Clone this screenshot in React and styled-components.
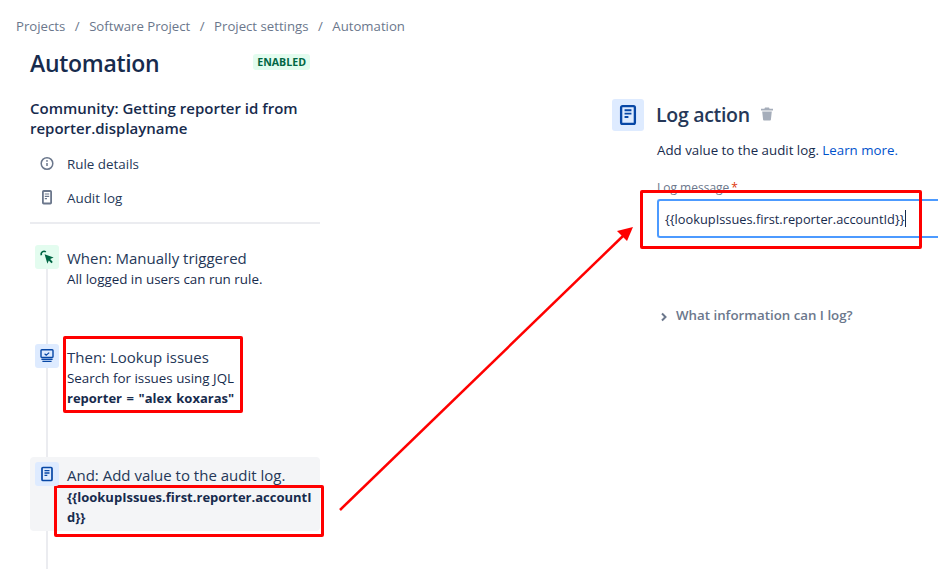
import React from 'react';
import styled, { createGlobalStyle } from 'styled-components';

const GlobalStyle = createGlobalStyle`
  html, body { margin: 0; padding: 0; background: #fff; }
  body {
    font-family: "Open Sans", "Noto Sans", sans-serif;
    color: #172b4d;
    width: 938px;
    height: 569px;
    overflow: hidden;
  }
`;

const Page = styled.div`
  position: relative;
  width: 938px;
  height: 569px;
  overflow: hidden;
  box-sizing: border-box;
  padding-top: 16px;
`;

const Breadcrumbs = styled.nav`
  display: flex;
  height: 20px;
  padding-left: 16px;
  font-size: 13.2px;
  line-height: 20px;
  color: #6b778c;
`;

const Crumb = styled.span`
  &:not(:last-child)::after {
    content: '/';
    padding: 0 9.5px;
  }
`;

const Columns = styled.div`
  display: flex;
  padding-left: 30px;
`;

const Sidebar = styled.aside`
  width: 290px;
  flex: none;
`;

const TitleRow = styled.div`
  display: flex;
  justify-content: space-between;
  align-items: flex-start;
  margin-top: 11px;
  padding-right: 10px;
`;

const Title = styled.h1`
  margin: 0;
  font-size: 23px;
  line-height: 32px;
  font-weight: 600;
  letter-spacing: -0.3px;
`;

const Badge = styled.span`
  margin-top: 7px;
  padding: 0 4px;
  height: 16px;
  font-size: 10.6px;
  line-height: 16px;
  font-weight: 700;
  color: #006644;
  background: #e3fcef;
  border-radius: 3px;
`;

const RuleName = styled.h2`
  margin: 19px 0 0;
  font-size: 15px;
  line-height: 20px;
  font-weight: 600;
`;

const SideNav = styled.ul`
  list-style: none;
  margin: 9px 0 0;
  padding: 0 0 7px 8px;
  border-bottom: 2px solid #ebecf0;
`;

const SideItem = styled.li`
  display: flex;
  align-items: center;
  height: 34px;
  font-size: 13.4px;
  color: #253858;

  svg {
    width: 18px;
    height: 18px;
    margin-right: 11px;
    color: #6b778c;
  }
`;

const Flow = styled.div`
  position: relative;
  padding-top: 21px;
  height: 324px;

  &::before {
    content: '';
    position: absolute;
    left: 16px;
    top: 21px;
    bottom: 0;
    width: 2px;
    background: #ebecf0;
  }
`;

const Step = styled.div`
  position: relative;
  display: flex;
  width: 290px;
  box-sizing: border-box;
  padding: 5px;
  height: ${({ $height }) => $height}px;
  margin-top: -5px;
  border-radius: 4px;
  background: ${({ $active }) => ($active ? '#f4f5f7' : 'transparent')};
`;

const StepIcon = styled.div`
  flex: none;
  width: 24px;
  height: 24px;
  margin-right: 8px;
  border-radius: 3px;
  display: flex;
  align-items: center;
  justify-content: center;
  background: ${({ $tone }) => ($tone === 'green' ? '#e3fcef' : '#deebff')};
  color: ${({ $tone }) => ($tone === 'green' ? '#006644' : '#0747a6')};
  z-index: 1;
`;

const StepBody = styled.div`
  position: relative;
  min-width: 0;
  flex: 1;
`;

const StepTitle = styled.div`
  font-size: 15px;
  line-height: 24px;
  margin-top: 1px;
  margin-bottom: ${({ $gap }) => $gap || 0}px;
  color: #253858;
`;

const StepText = styled.div`
  font-size: ${({ $strong }) => ($strong ? 13 : 13.4)}px;
  line-height: 19.5px;
  color: #172b4d;
  word-break: break-all;
  word-spacing: ${({ $strong }) => ($strong ? 1.2 : 0)}px;
  font-weight: ${({ $strong }) => ($strong ? 700 : 400)};
`;

const Panel = styled.section`
  margin-left: 292px;
  margin-top: 62px;
  width: 326px;
  flex: none;
`;

const PanelHead = styled.div`
  display: flex;
  align-items: center;
`;

const PanelIcon = styled.div`
  width: 32px;
  height: 32px;
  margin-right: 12px;
  border-radius: 3px;
  background: #deebff;
  color: #0747a6;
  display: flex;
  align-items: center;
  justify-content: center;
`;

const PanelTitle = styled.h2`
  margin: 0 9px 0 0;
  font-size: 19.5px;
  line-height: 34px;
  font-weight: 600;
  letter-spacing: -0.3px;
  color: #253858;
`;

const TrashIcon = styled.svg`
  width: 16px;
  height: 16px;
  color: #a5adba;
  margin-top: -2px;
`;

const PanelBody = styled.div`
  padding-left: 45px;
`;

const Description = styled.p`
  margin: 8px 0 0;
  font-size: 13.3px;
  line-height: 20px;
  color: #172b4d;
`;

const LearnLink = styled.a`
  color: #0052cc;
  text-decoration: none;
`;

const FieldLabel = styled.label`
  display: block;
  margin-top: 20px;
  font-size: 12px;
  line-height: 16px;
  font-weight: 400;
  color: #6b778c;

  &::after {
    content: '*';
    color: #de350b;
    margin-left: 2px;
  }
`;

const Field = styled.div`
  position: relative;
  margin-top: 3px;
`;

const InputBox = styled.div`
  height: 39px;
  width: 320px;
  box-sizing: border-box;
  border: 2px solid #4c9aff;
  border-right: none;
  border-radius: 3px 0 0 3px;
  padding: 0 6px;
  display: flex;
  align-items: center;
  font-size: 12.8px;
  color: #172b4d;
  white-space: nowrap;
`;

const Caret = styled.span`
  display: inline-block;
  width: 1px;
  height: 17px;
  background: #172b4d;
`;

const Disclosure = styled.div`
  display: flex;
  align-items: center;
  margin-top: 67px;
  margin-left: 3px;
  font-size: 13.3px;
  line-height: 20px;
  font-weight: 600;
  color: #6b778c;

  svg {
    width: 8px;
    height: 10px;
    margin-right: 8px;
    margin-top: 3px;
  }
`;

const Callout = styled.div`
  position: absolute;
  box-sizing: border-box;
  border: 3px solid #ff0000;
  border-radius: 2px;
  pointer-events: none;
  top: ${({ $top }) => $top}px;
  left: ${({ $left }) => $left}px;
  width: ${({ $width }) => $width}px;
  height: ${({ $height }) => $height}px;
`;

const ArrowLayer = styled.svg`
  position: absolute;
  inset: 0;
  pointer-events: none;
`;

const DocIcon = ({ size = 16 }) => (
  <svg width={size} height={size} viewBox="0 0 16 16" fill="none">
    <rect x="3" y="1.5" width="10" height="13" rx="1" stroke="currentColor" strokeWidth="1.7" />
    <path d="M5.5 4.6h5M5.5 7h5M5.5 9.4h2.8" stroke="currentColor" strokeWidth="1.4" />
  </svg>
);

const crumbs = ['Projects', 'Software Project', 'Project settings', 'Automation'];

const App = () => {
  return (
    <Page>
      <GlobalStyle />
      <Breadcrumbs>
        {crumbs.map((c) => (
          <Crumb key={c}>{c}</Crumb>
        ))}
      </Breadcrumbs>
      <Columns>
        <Sidebar>
          <TitleRow>
            <Title>Automation</Title>
            <Badge>ENABLED</Badge>
          </TitleRow>
          <RuleName>
            Community: Getting reporter id from
            <br />
            reporter.displayname
          </RuleName>
          <SideNav>
            <SideItem>
              <svg viewBox="0 0 18 18" fill="none">
                <circle cx="9" cy="8.500" r="5.800" stroke="currentColor" strokeWidth="1.500" />
                <circle cx="9" cy="5.900" r="0.900" fill="currentColor" />
                <path d="M9 7.900v3.200" stroke="currentColor" strokeWidth="1.500" />
              </svg>
              Rule details
            </SideItem>
            <SideItem>
              <svg viewBox="0 0 18 18" fill="none">
                <rect x="4.900" y="2" width="8.200" height="12.500" rx="0.800" stroke="currentColor" strokeWidth="1.800" />
                <path d="M6.800 5h4.400M6.800 7.300h4.400M6.800 9.600h2.200" stroke="currentColor" strokeWidth="1.200" />
              </svg>
              Audit log
            </SideItem>
          </SideNav>
          <Flow>
            <Step $height={104}>
              <StepIcon $tone="green">
                <svg width="18" height="18" viewBox="0 0 18 18" fill="none">
                  <path d="M3.400 7.200a2.800 2.800 0 0 1 4.400-3.200" stroke="currentColor" strokeWidth="1.600" />
                  <path d="M6.600 6.200l9 3.400-3.400 1.500 2.600 2.800-1.400 1.300-2.600-2.800-1.400 3.400z" fill="currentColor" />
                </svg>
              </StepIcon>
              <StepBody>
                <StepTitle>When: Manually triggered</StepTitle>
                <StepText>All logged in users can run rule.</StepText>
              </StepBody>
            </Step>
            <Step $height={123}>
              <StepIcon>
                <svg width="16" height="16" viewBox="0 0 16 16" fill="none">
                  <rect x="2" y="1.800" width="12" height="7.600" rx="0.800" stroke="currentColor" strokeWidth="1.400" />
                  <path d="M5.600 5.800l1.600 1.400 3-2.600" stroke="currentColor" strokeWidth="1.200" />
                  <path d="M2.400 11.200h11.200M3.400 13.400h9.200" stroke="currentColor" strokeWidth="1.400" />
                </svg>
              </StepIcon>
              <StepBody>
                <StepTitle>Then: Lookup issues</StepTitle>
                <StepText>Search for issues using JQL</StepText>
                <StepText $strong>reporter = "alex koxaras"</StepText>
                <Callout $top={-8} $left={-4} $width={180} $height={77} />
              </StepBody>
            </Step>
            <Step $active $height={74}>
              <StepIcon>
                <DocIcon />
              </StepIcon>
              <StepBody>
                <StepTitle $gap={1}>And: Add value to the audit log.</StepTitle>
                <StepText $strong>{'{{lookupIssues.first.reporter.accountId}}'}</StepText>
                <Callout $top={23} $left={-13} $width={270} $height={52} />
              </StepBody>
            </Step>
          </Flow>
        </Sidebar>
        <Panel>
          <PanelHead>
            <PanelIcon>
              <DocIcon size={22} />
            </PanelIcon>
            <PanelTitle>Log action</PanelTitle>
            <TrashIcon viewBox="0 0 16 16">
              <path
                fill="currentColor"
                d="M6 1.500h4l.6 1.200H14v1.800H2V2.700h3.400zM3.200 5.600h9.600l-.9 8.200c0 .4-.4.700-.8.700H4.900c-.4 0-.8-.3-.8-.7z"
              />
            </TrashIcon>
          </PanelHead>
          <PanelBody>
            <Description>
              Add value to the audit log. <LearnLink>Learn more.</LearnLink>
            </Description>
            <FieldLabel>Log message</FieldLabel>
            <Field>
              <InputBox>
                {'{{lookupIssues.first.reporter.accountId}}'}
                <Caret />
              </InputBox>
              <Callout $top={-9} $left={-17} $width={282} $height={59} />
            </Field>
            <Disclosure>
              <svg viewBox="0 0 8 10" fill="none">
                <path d="M2 1.500l3.500 3.500L2 8.500" stroke="currentColor" strokeWidth="2" />
              </svg>
              What information can I log?
            </Disclosure>
          </PanelBody>
        </Panel>
      </Columns>
      <ArrowLayer width="938" height="569" viewBox="0 0 938 569">
        <path d="M340 510L624 235" stroke="#ff0000" strokeWidth="2.500" fill="none" />
        <path d="M633 227L617 231L627 241Z" fill="#ff0000" />
      </ArrowLayer>
    </Page>
  );
};

export default App;
